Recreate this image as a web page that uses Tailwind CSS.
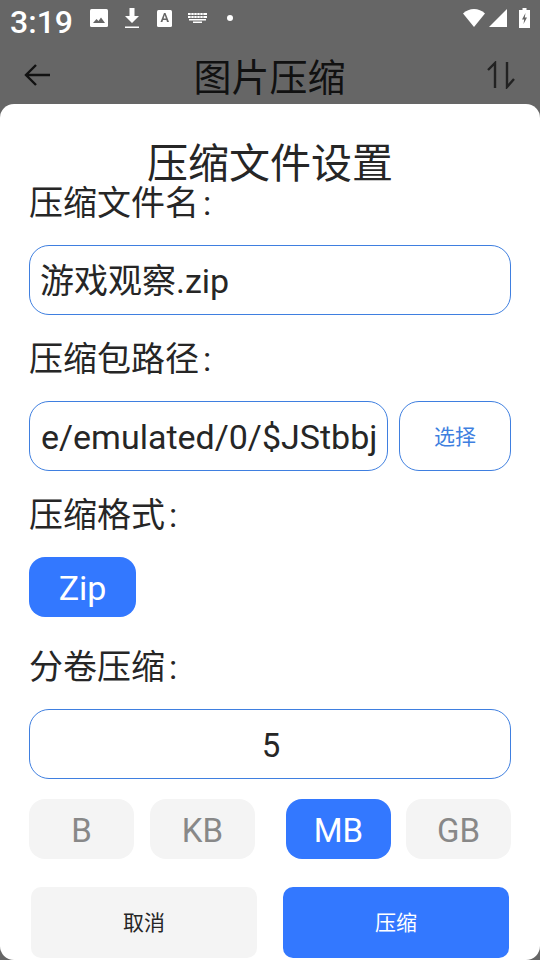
<!DOCTYPE html>
<html lang="zh">
<head>
  <meta charset="UTF-8">
  <meta name="viewport" content="width=device-width, initial-scale=1.0">
  <title>压缩文件设置</title>
  <script src="https://cdn.jsdelivr.net/npm/@tailwindcss/browser@4"></script>
</head>
<body class="bg-[#666666] font-['Roboto','Noto_Sans_CJK_SC',sans-serif] text-[#262626]">

<div class="relative w-[540px] h-[960px] overflow-hidden flex flex-col">
  <!-- status bar -->
  <div class="h-[45px] flex items-center pl-[10px] pr-[10px] text-white shrink-0">
    <span class="text-[32px] leading-none font-medium w-[70px] -mt-[2px]">3:19</span>
    <div class="flex items-center -mt-[9px] ml-[10px]">
      <svg class="w-[18px] h-[18px]" viewBox="0 0 18 18"><rect width="18" height="18" rx="1.500" fill="#fff"/><path d="M3 14l3.500-4 2 2 2.500-3.500L15 14z" fill="#666"/></svg>
      <svg class="w-[16px] h-[22px] ml-[16px]" viewBox="0 0 16 22"><path d="M5.500 1h5v8H15l-7 7-7-7h4.500zM1 19.500h14V21H1z" fill="#fff"/></svg>
      <svg class="w-[15px] h-[17px] ml-[17px]" viewBox="0 0 15 17"><rect width="15" height="17" rx="1.500" fill="#fff"/><path d="M3.500 12L7 3h1.500L12 12h-2l-.6-2H6l-.6 2zM6.600 8.400h2.300L7.750 5z" fill="#666"/></svg>
      <svg class="w-[19px] h-[10px] ml-[16px]" viewBox="0 0 19 10"><path d="M0 0h19v2H0zM0 3h19v2H0zM1 6h17v1.500H1zM5 8.500h9V10H5z" fill="#fff"/><path d="M3 0v5M6 0v5M9 0v5M12 0v5M15 0v5" stroke="#666" stroke-width=".6"/></svg>
      <span class="w-[6px] h-[6px] rounded-full bg-white ml-[20px]"></span>
    </div>
    <div class="ml-auto flex items-center -mt-[9px]">
      <svg class="w-[22px] h-[18px]" viewBox="0 0 22 18"><path d="M0 4.500C3 1.500 7 0 11 0s8 1.500 11 4.500L11 18z" fill="#fff"/></svg>
      <svg class="w-[18px] h-[18px] ml-[4px]" viewBox="0 0 18 18"><path d="M18 0v18H0z" fill="#fff"/></svg>
      <svg class="w-[11px] h-[20px] ml-[12px]" viewBox="0 0 11 20"><path d="M3.500 0h4v2H11v18H0V2h3.500z" fill="#fff"/><path d="M6.500 5L3 11.500h2.200L4.500 16 8 9.500H5.800z" fill="#666"/></svg>
    </div>
  </div>

  <!-- toolbar behind the dialog -->
  <div class="h-[59px] flex items-center justify-between pl-[22px] pr-[25px] shrink-0">
    <svg class="w-[30px] h-[30px]" viewBox="0 0 30 30" fill="none" stroke="#111" stroke-width="2.400"><path d="M28 15H4M14 5L4 15l10 10"/></svg>
    <span class="text-[38px] leading-none text-[#111] mt-[6px]">图片压缩</span>
    <svg class="w-[28px] h-[28px]" viewBox="0 0 28 28" fill="none" stroke="#222" stroke-width="2.400"><path d="M1 9l7-7v25M20 1v25l7-8"/></svg>
  </div>

  <!-- dialog -->
  <div class="flex-1 bg-white rounded-[14px] px-[29px] flex flex-col">
    <h2 class="text-[41px] leading-[38px] text-center mt-[41px] h-[38px] font-normal">压缩文件设置</h2>
    <p class="text-[34px] leading-[40px] h-[40px] overflow-hidden">压缩文件名<span class="ml-[4px] inline-block leading-[34px]">:</span></p>
    <div class="h-[70px] mt-[22px] pt-[2px] border border-[#3f7fe0] rounded-[20px] flex items-center px-[10px] text-[34px]">游戏观察.zip</div>
    <p class="text-[34px] leading-[40px] h-[40px] mt-[24px] overflow-hidden">压缩包路径<span class="ml-[4px] inline-block leading-[34px]">:</span></p>
    <div class="flex gap-[11px] mt-[22px]">
      <div class="w-[359px] h-[70px] pt-[2px] border border-[#3f7fe0] rounded-[20px] flex items-center pl-[11px] text-[34px] overflow-hidden whitespace-nowrap">e/emulated/0/$JStbbj</div>
      <button class="w-[112px] h-[70px] pt-[3px] border border-[#3f7fe0] rounded-[20px] text-[#3f7fe0] text-[21px]">选择</button>
    </div>
    <p class="text-[34px] leading-[40px] h-[40px] mt-[24px] overflow-hidden">压缩格式<span class="ml-[4px] inline-block leading-[34px]">:</span></p>
    <button class="w-[107px] h-[60px] pt-[2px] mt-[22px] rounded-[16px] bg-[#3378ff] text-white text-[34px]">Zip</button>
    <p class="text-[34px] leading-[40px] h-[40px] mt-[30px] overflow-hidden">分卷压缩<span class="ml-[4px] inline-block leading-[34px]">:</span></p>
    <div class="h-[70px] mt-[22px] pt-[3px] border border-[#3f7fe0] rounded-[20px] flex items-center justify-center text-[33px] pl-[2px]">5</div>
    <div class="flex mt-[20px] text-[33px] text-[#888888]">
      <div class="w-[105px] h-[60px] pt-[3px] rounded-[16px] bg-[#f4f4f4] flex items-center justify-center">B</div>
      <div class="w-[105px] h-[60px] pt-[3px] ml-[16px] rounded-[16px] bg-[#f4f4f4] flex items-center justify-center">KB</div>
      <div class="w-[105px] h-[60px] pt-[3px] ml-[31px] rounded-[16px] bg-[#3378ff] text-white flex items-center justify-center">MB</div>
      <div class="w-[105px] h-[60px] pt-[3px] ml-[15px] rounded-[16px] bg-[#f4f4f4] flex items-center justify-center">GB</div>
    </div>
    <div class="flex justify-between px-[2px] mt-[28px] text-[21px]">
      <button class="w-[226px] h-[71px] pt-[2px] rounded-[10px] bg-[#f4f4f4] text-[#262626]">取消</button>
      <button class="w-[226px] h-[71px] pt-[2px] rounded-[10px] bg-[#3378ff] text-white">压缩</button>
    </div>
  </div>
</div>

</body>
</html>
